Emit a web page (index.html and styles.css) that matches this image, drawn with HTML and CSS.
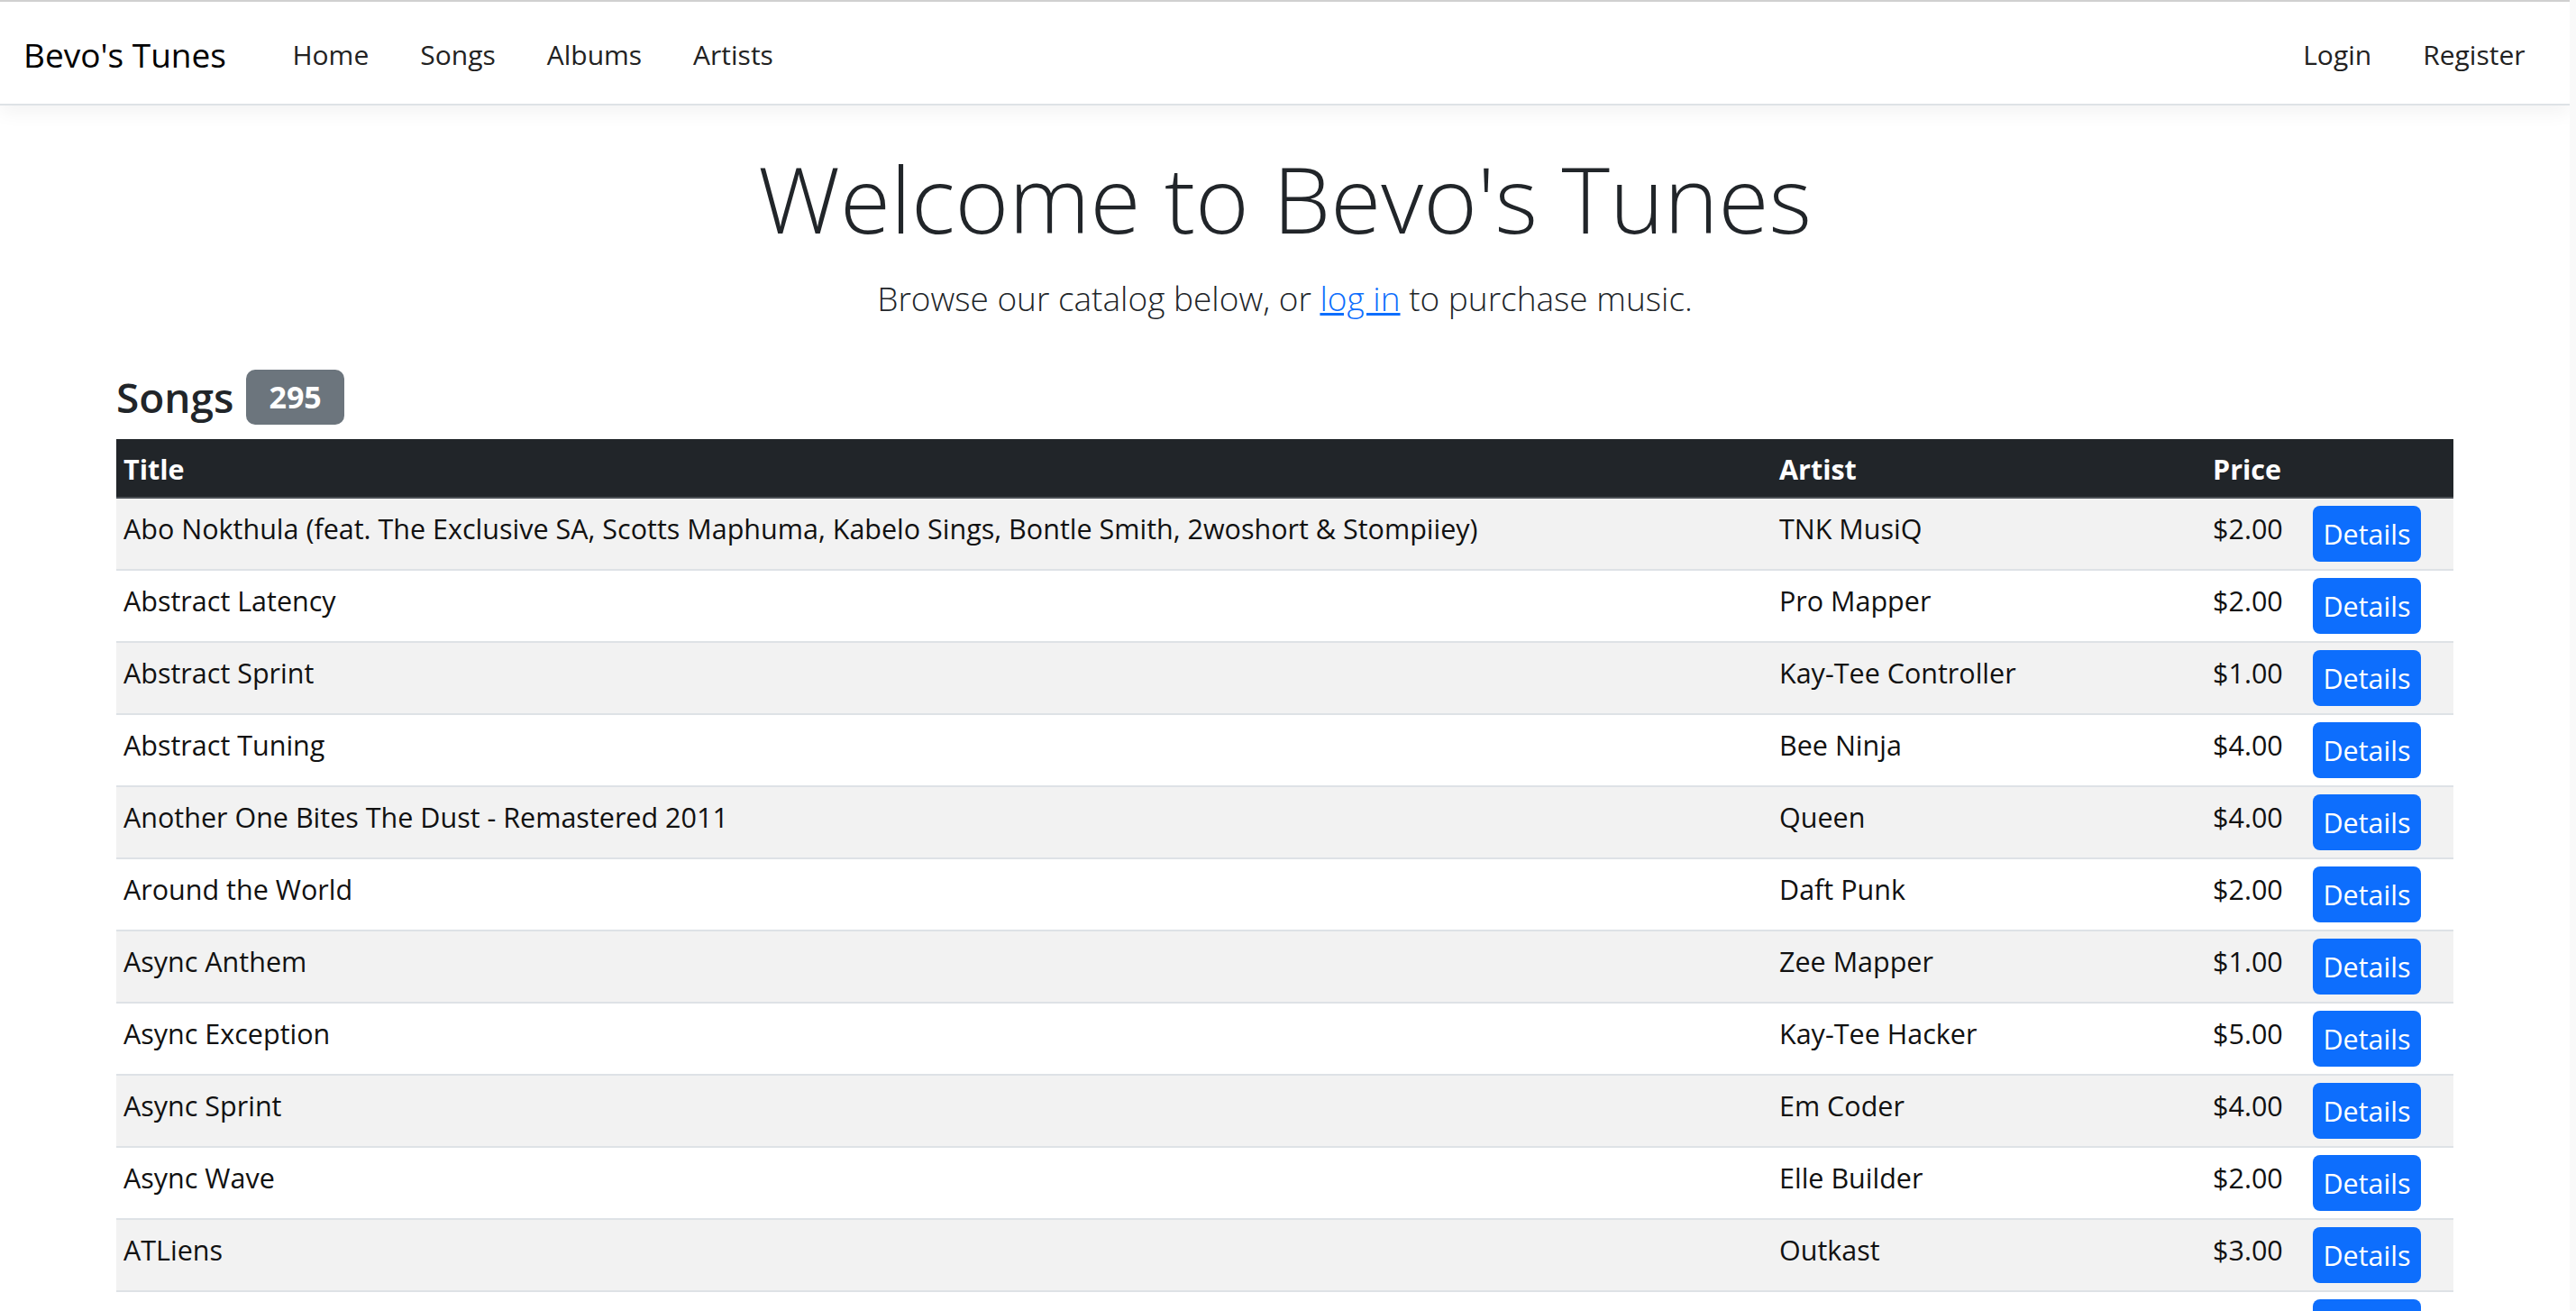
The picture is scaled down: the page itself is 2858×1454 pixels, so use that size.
FILE: index.html
```html
<!DOCTYPE html>
<html lang="en">
<head>
    <meta charset="UTF-8">
    <meta name="viewport" content="width=device-width, initial-scale=1.0">
    <title>Bevo's Tunes</title>
    <link rel="stylesheet" href="styles.css">
</head>
<body>

    <!-- Top navigation -->
    <nav class="navbar">
        <a class="brand" href="#">Bevo's Tunes</a>
        <ul class="nav-links">
            <li><a href="#">Home</a></li>
            <li><a href="#">Songs</a></li>
            <li><a href="#">Albums</a></li>
            <li><a href="#">Artists</a></li>
        </ul>
        <ul class="nav-links nav-right">
            <li><a href="#">Login</a></li>
            <li><a href="#">Register</a></li>
        </ul>
    </nav>

    <main class="page">
        <header class="hero">
            <h1>Welcome to Bevo's Tunes</h1>
            <p class="lead">Browse our catalog below, or <a href="#">log in</a> to purchase music.</p>
        </header>

        <section class="catalog">
            <div class="section-title">
                <h2>Songs</h2>
                <span class="badge">295</span>
            </div>

            <table class="songs">
                <thead>
                    <tr>
                        <th>Title</th>
                        <th class="col-artist">Artist</th>
                        <th class="col-price">Price</th>
                        <th class="col-action"></th>
                    </tr>
                </thead>
                <tbody>
                    <tr>
                        <td>Abo Nokthula (feat. The Exclusive SA, Scotts Maphuma, Kabelo Sings, Bontle Smith, 2woshort &amp; Stompiiey)</td>
                        <td>TNK MusiQ</td>
                        <td>$2.00</td>
                        <td class="action"><a class="btn" href="#">Details</a></td>
                    </tr>
                    <tr>
                        <td>Abstract Latency</td>
                        <td>Pro Mapper</td>
                        <td>$2.00</td>
                        <td class="action"><a class="btn" href="#">Details</a></td>
                    </tr>
                    <tr>
                        <td>Abstract Sprint</td>
                        <td>Kay-Tee Controller</td>
                        <td>$1.00</td>
                        <td class="action"><a class="btn" href="#">Details</a></td>
                    </tr>
                    <tr>
                        <td>Abstract Tuning</td>
                        <td>Bee Ninja</td>
                        <td>$4.00</td>
                        <td class="action"><a class="btn" href="#">Details</a></td>
                    </tr>
                    <tr>
                        <td>Another One Bites The Dust - Remastered 2011</td>
                        <td>Queen</td>
                        <td>$4.00</td>
                        <td class="action"><a class="btn" href="#">Details</a></td>
                    </tr>
                    <tr>
                        <td>Around the World</td>
                        <td>Daft Punk</td>
                        <td>$2.00</td>
                        <td class="action"><a class="btn" href="#">Details</a></td>
                    </tr>
                    <tr>
                        <td>Async Anthem</td>
                        <td>Zee Mapper</td>
                        <td>$1.00</td>
                        <td class="action"><a class="btn" href="#">Details</a></td>
                    </tr>
                    <tr>
                        <td>Async Exception</td>
                        <td>Kay-Tee Hacker</td>
                        <td>$5.00</td>
                        <td class="action"><a class="btn" href="#">Details</a></td>
                    </tr>
                    <tr>
                        <td>Async Sprint</td>
                        <td>Em Coder</td>
                        <td>$4.00</td>
                        <td class="action"><a class="btn" href="#">Details</a></td>
                    </tr>
                    <tr>
                        <td>Async Wave</td>
                        <td>Elle Builder</td>
                        <td>$2.00</td>
                        <td class="action"><a class="btn" href="#">Details</a></td>
                    </tr>
                    <tr>
                        <td>ATLiens</td>
                        <td>Outkast</td>
                        <td>$3.00</td>
                        <td class="action"><a class="btn" href="#">Details</a></td>
                    </tr>
                    <tr>
                        <td>Autumn Leaves</td>
                        <td>Bee Coder</td>
                        <td>$4.00</td>
                        <td class="action"><a class="btn" href="#">Details</a></td>
                    </tr>
                    <tr>
                        <td>Azure Sprint</td>
                        <td>Pro Hacker</td>
                        <td>$2.00</td>
                        <td class="action"><a class="btn" href="#">Details</a></td>
                    </tr>
                </tbody>
            </table>
        </section>
    </main>

</body>
</html>
```

FILE: styles.css
```css
/* General */
html {
    background: #f9f9f9; /* strip on the right, like the scrollbar track */
}

body {
    margin: 0 7px 0 0;
    font-family: "Open Sans", "Noto Sans", sans-serif;
    font-size: 30.5px;
    color: #212529;
    background: #fff;
}

a {
    text-decoration: none;
}

/* Navbar */
.navbar {
    display: flex;
    align-items: center;
    height: 110px;
    padding: 3px 21px 0 26px;
    border-top: 2px solid #d0d0d0;
    border-bottom: 2px solid #dee2e6;
    box-shadow: 0 8px 20px rgba(0, 0, 0, 0.05);
    background: #fff;
}

.brand {
    font-size: 37px;
    color: #000;
    margin-right: 45px;
}

.nav-links {
    display: flex;
    list-style: none;
    margin: 0;
    padding: 0;
}

.nav-links a {
    display: block;
    padding: 0 28.5px;
    font-size: 30px;
    color: #222;
}

.nav-right {
    margin-left: auto;
}

/* Page body */
.page {
    padding: 42px 129px 0;
}

.hero {
    text-align: center;
}

.hero h1 {
    margin: 0;
    font-size: 102px;
    font-weight: 300;
    line-height: 1.2;
}

.lead {
    margin: 22px 0 0;
    font-size: 37px;
    font-weight: 300;
    line-height: 1.5;
}

.lead a {
    color: #0d6efd;
    text-decoration: underline;
}

/* Songs heading */
.section-title {
    display: flex;
    align-items: center;
    gap: 14px;
    margin-top: 51px;
}

.section-title h2 {
    margin: 0;
    font-size: 46px;
    font-weight: 600;
    line-height: 61px;
}

.badge {
    height: 61px;
    padding: 0 25px;
    line-height: 61px;
    font-size: 34px;
    font-weight: 700;
    color: #fff;
    background: #6c757d;
    border-radius: 10px;
}

/* Songs table */
.songs {
    width: 100%;
    margin-top: 16px;
    border-collapse: collapse;
    table-layout: fixed;
    line-height: 44px;
}

.songs th {
    padding: 11px 8px 9px;
    text-align: left;
    font-weight: 700;
    color: #fff;
    background: #212529;
    border-bottom: 2px solid #4b5055;
}

/* widths are content widths, the 16px of padding comes on top */
.col-artist {
    width: 465px;
}

.col-price {
    width: 95px;
}

.col-action {
    width: 148px;
}

.songs td {
    padding: 11px 8px 8px;
    vertical-align: top;
    color: #111;
    border-bottom: 2px solid #dee2e6;
}

.songs tbody tr:nth-child(odd) td {
    background: #f2f2f2;
}

.songs td.action {
    padding: 8px;
}

.btn {
    display: block;
    width: 120px;
    padding: 9px 0;
    text-align: center;
    color: #fff;
    background: #0d6efd;
    border-radius: 8px;
}
```
